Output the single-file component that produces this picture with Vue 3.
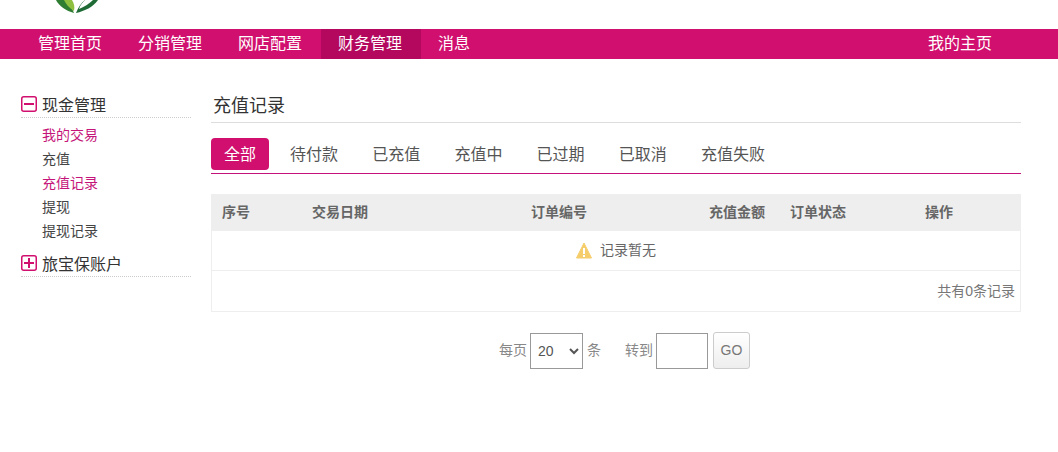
<script setup>
const navItems = [
  { label: '管理首页' },
  { label: '分销管理' },
  { label: '网店配置' },
  { label: '财务管理', active: true },
  { label: '消息' },
]
const cashLinks = [
  { label: '我的交易', on: true },
  { label: '充值' },
  { label: '充值记录', on: true },
  { label: '提现' },
  { label: '提现记录' },
]
const tabs = ['全部', '待付款', '已充值', '充值中', '已过期', '已取消', '充值失败']
</script>

<template>
  <div class="page">
    <header class="top">
      <svg class="logo" width="44" height="14" viewBox="0 0 44 14">
        <path d="M1 0 C4 6 11 11 19 13 C17 8 14 3 11 0 Z" fill="#2f7d32" />
        <path d="M9 0 C11 4 14 8 19 11 C20 7 19 3 17 0 Z" fill="#8fbf3f" />
        <path d="M43 0 C38 7 30 11 21 13 C23 8 26 3 30 0 Z" fill="#1f6b35" />
        <path d="M38 0 C34 4 29 7 24 9 C25 5 28 2 30 0 Z" fill="#ffffff" />
      </svg>
    </header>
    <nav class="nav">
      <a v-for="n in navItems" :key="n.label" class="nav-item" :class="{ active: n.active }">{{ n.label }}</a>
      <a class="nav-home">我的主页</a>
    </nav>
    <div class="body">
      <aside class="side">
        <div class="group-title">
          <svg class="tog" width="16" height="16" viewBox="0 0 16 16">
            <rect x="0.75" y="0.75" width="14.5" height="14.5" rx="2" fill="none" stroke="#d10f6e" stroke-width="1.5" />
            <rect x="3" y="7" width="10" height="2" fill="#d10f6e" />
          </svg>
          <span>现金管理</span>
        </div>
        <ul class="links">
          <li v-for="l in cashLinks" :key="l.label" :class="{ on: l.on }">{{ l.label }}</li>
        </ul>
        <div class="group-title second">
          <svg class="tog" width="16" height="16" viewBox="0 0 16 16">
            <rect x="0.75" y="0.75" width="14.5" height="14.5" rx="2" fill="none" stroke="#d10f6e" stroke-width="1.5" />
            <rect x="3" y="7" width="10" height="2" fill="#d10f6e" />
            <rect x="7" y="3" width="2" height="10" fill="#d10f6e" />
          </svg>
          <span>旅宝保账户</span>
        </div>
      </aside>
      <main class="main">
        <h2 class="title">充值记录</h2>
        <div class="tabs">
          <a v-for="(t, i) in tabs" :key="t" class="tab" :class="{ current: i === 0 }">{{ t }}</a>
        </div>
        <div class="table">
          <div class="thead">
            <span class="c1">序号</span>
            <span class="c2">交易日期</span>
            <span class="c3">订单编号</span>
            <span class="c4">充值金额</span>
            <span class="c5">订单状态</span>
            <span class="c6">操作</span>
          </div>
          <div class="empty">
            <svg class="warn" width="16" height="17" viewBox="0 0 16 17">
              <path d="M8 1 L15.5 16 L0.5 16 Z" fill="#f5cd6b" stroke="#f5cd6b" stroke-linejoin="round" />
              <rect x="7" y="6" width="2" height="6" fill="#fff" />
              <rect x="7" y="13" width="2" height="2" fill="#fff" />
            </svg>
            <span>记录暂无</span>
          </div>
          <div class="total">共有0条记录</div>
        </div>
        <div class="pager">
          <span class="lbl">每页</span>
          <select class="size"><option>20</option></select>
          <span class="lbl">条</span>
          <span class="lbl jump">转到</span>
          <input class="goto" type="text" />
          <button class="go">GO</button>
        </div>
      </main>
    </div>
  </div>
</template>

<style>
html, body { margin: 0; background: #fff; }
</style>

<style scoped>
.page {
  width: 1058px;
  height: 452px;
  overflow: hidden;
  font-family: "Liberation Sans", "Noto Sans CJK SC", sans-serif;
  color: #333;
}
.top { height: 29px; }
.logo { display: block; margin-left: 55px; }
.nav {
  height: 30px;
  background: #d10f6e;
  display: flex;
  padding-left: 21px;
  font-size: 16px;
  line-height: 30px;
  color: #fff;
}
.nav-item { padding: 0 19px 0 17px; }
.nav-item.active { background: #b4085e; }
.nav-home { margin-left: auto; margin-right: 66px; }
.body { display: flex; padding: 36px 37px 0 21px; }
.side { width: 170px; margin-right: 20px; flex: none; }
.group-title {
  display: flex;
  align-items: center;
  gap: 5px;
  height: 18px;
  padding-bottom: 4px;
  border-bottom: 1px dotted #ccc;
  font-size: 16px;
  color: #333;
}
.group-title.second { margin-top: 11px; }
.links { list-style: none; margin: 5px 0 0; padding: 0 0 0 21px; font-size: 14px; }
.links li { height: 24px; line-height: 24px; color: #444; }
.links li.on { color: #c5157a; }
.main { flex: 1; min-width: 0; }
.title {
  margin: 0;
  padding-left: 2px;
  height: 27px;
  line-height: 23px;
  font-size: 18px;
  font-weight: 400;
  color: #333;
  border-bottom: 1px solid #ddd;
}
.tabs {
  display: flex;
  margin-top: 15px;
  height: 35px;
  border-bottom: 1px solid #c4127c;
  font-size: 16px;
  line-height: 33px;
  color: #555;
}
.tab { padding: 0 17.1px; white-space: nowrap; }
.tab.current {
  width: 58px;
  height: 32px;
  box-sizing: border-box;
  padding: 0;
  margin-right: 3.9px;
  text-align: center;
  background: #d10f6e;
  color: #fff;
  border-radius: 4px;
}
.table { margin-top: 20px; border: 1px solid #eee; border-top: 0; }
.thead {
  display: flex;
  height: 37px;
  margin: 0 -1px;
  background: #eee;
  font-size: 14px;
  font-weight: 700;
  line-height: 37px;
  color: #666;
}
.c1 { margin-left: 11px; width: 90px; }
.c2 { width: 219px; }
.c3 { width: 178px; text-align: left; }
.c4 { width: 81px; }
.c5 { width: 135px; }
.empty {
  height: 36px;
  padding-bottom: 3px;
  border-bottom: 1px solid #eee;
  display: flex;
  align-items: center;
  justify-content: center;
  gap: 8px;
  font-size: 14px;
  color: #666;
}
.warn { margin-top: 3px; }
.total {
  height: 40px;
  line-height: 41px;
  padding-right: 5px;
  text-align: right;
  font-size: 14px;
  color: #777;
}
.pager {
  display: flex;
  align-items: center;
  margin-top: 20px;
  padding-left: 288px;
  font-size: 14px;
  color: #888;
}
.lbl { margin-bottom: 3px; }
.size {
  width: 53px;
  height: 36px;
  margin: 0 4px 0 3px;
  padding-left: 3px;
  border: 1px solid #999;
  border-radius: 0;
  background: #fff;
  font-size: 14px;
  color: #555;
  font-family: inherit;
}
.jump { margin-left: 24px; }
.goto {
  width: 52px;
  height: 36px;
  box-sizing: border-box;
  margin: 0 5px 0 3px;
  border: 1px solid #999;
  padding: 0;
  background: #fff;
}
.go {
  width: 37px;
  height: 37px;
  padding: 0 0 2px;
  border: 1px solid #ccc;
  border-radius: 3px;
  background: linear-gradient(#fff, #eee);
  font-size: 14px;
  font-family: inherit;
  color: #777;
}
</style>
